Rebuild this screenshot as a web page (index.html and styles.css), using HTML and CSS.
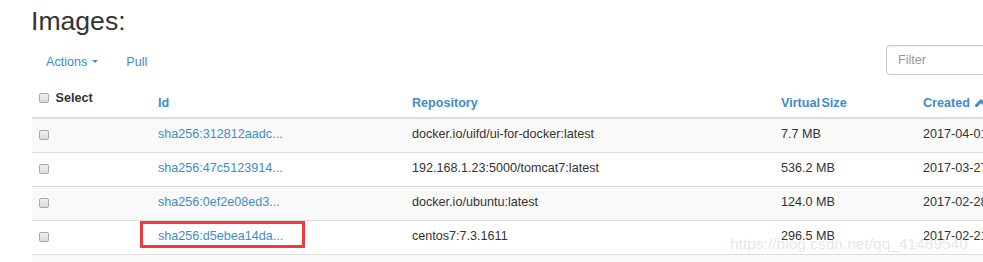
FILE: index.html
```html
<!DOCTYPE html>
<html>
<head>
<meta charset="utf-8">
<title>Images</title>
<link rel="stylesheet" href="styles.css">
</head>
<body>
<div class="page">
  <h1 class="title">Images:</h1>
  <div class="toolbar">
    <div class="nav">
      <a class="nav-link" href="#">Actions <span class="caret"></span></a>
      <a class="nav-link" href="#">Pull</a>
    </div>
    <input class="filter" type="text" placeholder="Filter">
  </div>
  <table class="grid">
    <colgroup>
      <col class="c-sel"><col class="c-id"><col class="c-repo"><col class="c-size"><col class="c-created">
    </colgroup>
    <thead>
      <tr>
        <th class="sel"><label class="sel-label"><input class="cb cb-head" type="checkbox"> Select</label></th>
        <th><a class="th-link" href="#">Id</a></th>
        <th><a class="th-link" href="#">Repository</a></th>
        <th><a class="th-link vs" href="#">Virtual Size</a></th>
        <th><a class="th-link" href="#">Created <svg class="chev" width="12" height="8" viewBox="0 0 12 8"><polyline points="1.5,6.5 6,2 10.5,6.5" fill="none" stroke="#428bca" stroke-width="3" stroke-linecap="square"/></svg></a></th>
      </tr>
    </thead>
    <tbody>
      <tr class="odd">
        <td class="sel"><input class="cb" type="checkbox"></td>
        <td><a class="link" href="#">sha256:312812aadc...</a></td>
        <td>docker.io/uifd/ui-for-docker:latest</td>
        <td>7.7 MB</td>
        <td>2017-04-01</td>
      </tr>
      <tr>
        <td class="sel"><input class="cb" type="checkbox"></td>
        <td><a class="link" href="#">sha256:47c5123914...</a></td>
        <td>192.168.1.23:5000/tomcat7:latest</td>
        <td>536.2 MB</td>
        <td>2017-03-27</td>
      </tr>
      <tr class="odd">
        <td class="sel"><input class="cb" type="checkbox"></td>
        <td><a class="link" href="#">sha256:0ef2e08ed3...</a></td>
        <td>docker.io/ubuntu:latest</td>
        <td>124.0 MB</td>
        <td>2017-02-28</td>
      </tr>
      <tr>
        <td class="sel"><input class="cb" type="checkbox"></td>
        <td class="marked"><a class="link" href="#">sha256:d5ebea14da...</a><span class="highlight"></span></td>
        <td>centos7:7.3.1611</td>
        <td>296.5 MB</td>
        <td>2017-02-21</td>
      </tr>
      <tr class="odd">
        <td class="sel">&nbsp;</td>
        <td>&nbsp;</td>
        <td>&nbsp;</td>
        <td>&nbsp;</td>
        <td>&nbsp;</td>
      </tr>
    </tbody>
  </table>
  <div class="watermark">https://blog.csdn.net/qq_41489540</div>
</div>
</body>
</html>
```
FILE: styles.css
```css
html, body {
  margin: 0;
  padding: 0;
  overflow: hidden;
  background: #fff;
}
body {
  font-family: "Liberation Sans", Arial, sans-serif;
  font-size: 12.6px;
  line-height: 18px;
  color: #333;
}
.page {
  width: 1004px;
  margin-left: 32px;
}
.title {
  margin: 7px 0 0 -1px;
  font-size: 26.6px;
  line-height: 29px;
  font-weight: normal;
  color: #333;
}
.toolbar {
  margin-top: 9px;
  height: 30px;
  display: flex;
  align-items: center;
  justify-content: space-between;
}
.nav {
  display: flex;
  align-items: center;
  padding-left: 14px;
  gap: 28px;
  padding-top: 3px;
}
.nav-link {
  color: #428bca;
  text-decoration: none;
  display: inline-flex;
  align-items: center;
}
.caret {
  display: inline-block;
  width: 0;
  height: 0;
  margin-left: 5px;
  border-top: 3.5px solid #428bca;
  border-left: 3.5px solid transparent;
  border-right: 3.5px solid transparent;
}
.filter {
  box-sizing: border-box;
  width: 150px;
  height: 30px;
  padding: 6px 11px;
  border: 1px solid #ccc;
  border-radius: 4px;
  font-family: "Liberation Sans", Arial, sans-serif;
  font-size: 12.6px;
  color: #555;
  box-shadow: inset 0 1px 1px rgba(0,0,0,0.075);
  outline: none;
}
.filter::placeholder {
  color: #999;
}
.grid {
  margin-top: 11px;
  width: 1004px;
  table-layout: fixed;
  border-collapse: collapse;
  border-spacing: 0;
}
.c-sel { width: 118px; }
.c-id { width: 254px; }
.c-repo { width: 369px; }
.c-size { width: 142px; }
.c-created { width: 121px; }
.grid th {
  text-align: left;
  vertical-align: bottom;
  padding: 3px 8px 5px;
  border-bottom: 2px solid #ddd;
  font-weight: bold;
  white-space: nowrap;
}
.grid th.sel {
  padding-left: 7px;
}
.sel-label {
  display: block;
  margin-bottom: 5px;
  color: #333;
}
.th-link {
  color: #428bca;
  text-decoration: none;
}
.vs {
  word-spacing: -2px;
}
.chev {
  vertical-align: 0;
  margin-left: 2px;
}
.grid td {
  padding: 6px 8px 9px;
  border-top: 1px solid #ddd;
  white-space: nowrap;
}
.grid td.sel {
  padding-left: 7px;
}
.grid tr.odd td {
  background: #f9f9f9;
}
.link {
  color: #428bca;
  text-decoration: none;
}
.cb {
  -webkit-appearance: none;
  appearance: none;
  box-sizing: border-box;
  width: 10px;
  height: 10px;
  margin: 0;
  border: 1px solid #a9a9a9;
  border-radius: 2px;
  background: linear-gradient(#f0f0f0, #dcdcdc);
  vertical-align: -2px;
}
.cb-head {
  vertical-align: -1px;
  margin-right: 3px;
}
.marked {
  position: relative;
}
.highlight {
  position: absolute;
  left: -10px;
  top: 0;
  width: 165px;
  height: 27px;
  box-sizing: border-box;
  border: 3px solid #f03a3c;
  pointer-events: none;
}
.watermark {
  position: absolute;
  left: 730px;
  top: 236px;
  font-size: 15.5px;
  line-height: 1;
  color: rgba(160,160,160,0.28);
  white-space: nowrap;
  pointer-events: none;
}
```
